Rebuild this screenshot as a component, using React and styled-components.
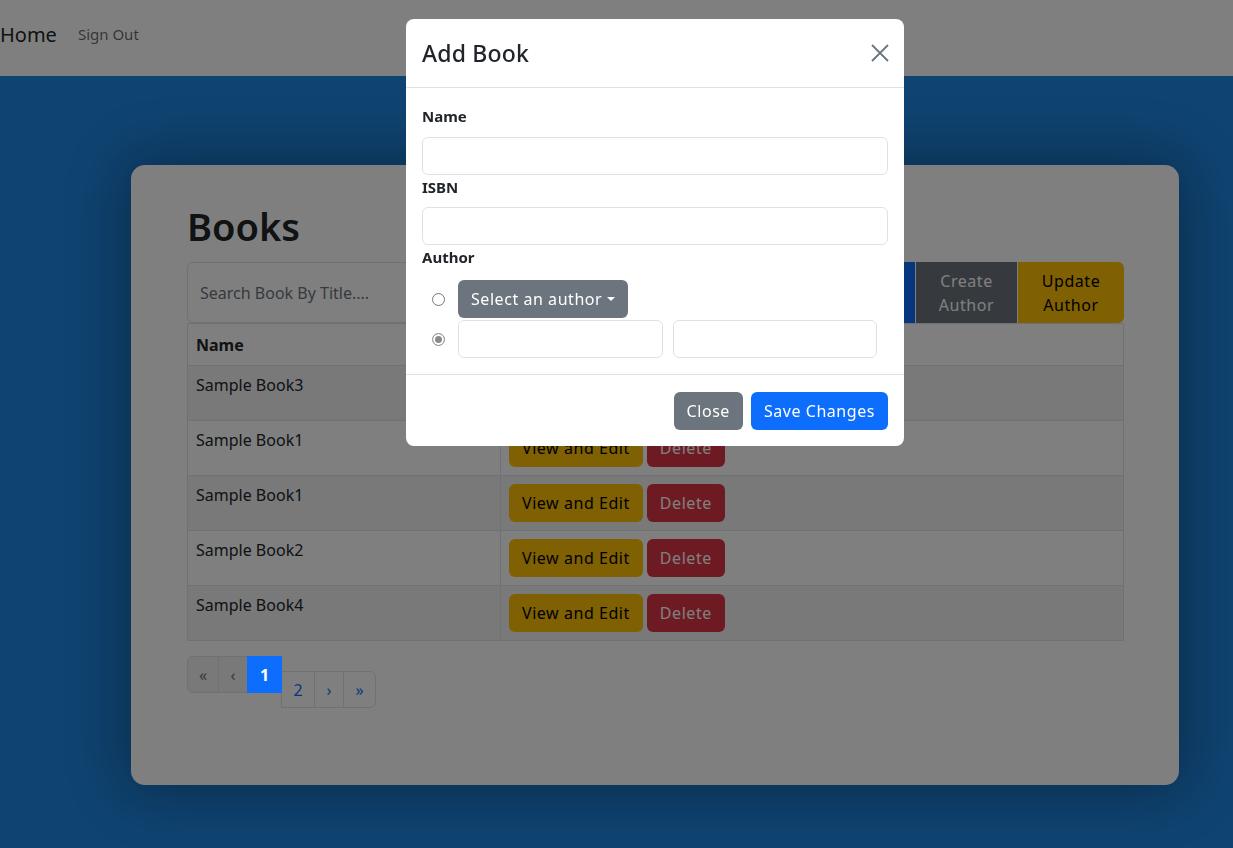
import styled, { createGlobalStyle, css } from "styled-components";

const GlobalStyle = createGlobalStyle`
  * { box-sizing: border-box; }
  body {
    margin: 0;
    font-family: "Noto Sans", "Liberation Sans", sans-serif;
    color: #212529;
    font-size: 16px;
  }
`;

const Page = styled.div`
  min-height: 100vh;
  background: #1e88e5;
  overflow: hidden;
`;

const Navbar = styled.nav`
  height: 76px;
  background: #fff;
  display: flex;
  align-items: center;
  padding-bottom: 8px;
`;

const Brand = styled.a`
  font-size: 20px;
  color: #212529;
  margin-right: 13px;
`;

const NavLink = styled.a`
  font-size: 15px;
  color: rgba(0, 0, 0, 0.6);
  padding: 8px;
`;

const Main = styled.main`
  padding-top: 89px;
  padding-bottom: 63px;
`;

const Card = styled.section`
  width: 1048px;
  height: 620px;
  margin: 0 0 0 131px;
  background: #fff;
  border-radius: 14px;
  padding: 37px 55px 0 56px;
  box-shadow: 0 0 60px 12px rgba(0, 0, 0, 0.3);
`;

const Title = styled.h1`
  font-size: 38px;
  line-height: 48px;
  font-weight: 600;
  margin: 0 0 12px;
`;

const InputGroup = styled.div`
  display: flex;
  height: 61px;
`;

const SearchInput = styled.input`
  flex: 1;
  border: 1px solid #dee2e6;
  border-radius: 6px 0 0 6px;
  padding: 6px 12px;
  font: inherit;
  font-size: 16px;
  &::placeholder { color: #6c757d; }
`;

const variants = {
  primary: css`background: #0d6efd; color: #fff;`,
  secondary: css`background: #6c757d; color: #fff;`,
  warning: css`background: #ffc107; color: #000;`,
  danger: css`background: #dc3545; color: #fff;`,
};

const Button = styled.button`
  border: 1px solid transparent;
  border-radius: 6px;
  padding: 6px 12px;
  font-family: inherit;
  font-size: 16px;
  line-height: 24px;
  letter-spacing: 0.55px;
  cursor: pointer;
  ${(p) => variants[p.$variant]}
`;

const GroupButton = styled(Button)`
  width: ${(p) => p.$w}px;
  border-radius: ${(p) => (p.$last ? "0 6px 6px 0" : "0")};
  margin-left: 1px;
`;

const Table = styled.table`
  width: 100%;
  border-collapse: collapse;
  border: 1px solid #dee2e6;
`;

const Th = styled.th`
  text-align: left;
  padding: 8px;
  height: 42px;
  border: 1px solid #dee2e6;
  font-weight: 700;
`;

const Row = styled.tr`
  background: ${(p) => (p.$striped ? "#f2f2f2" : "#fff")};
`;

const Td = styled.td`
  padding: 8px;
  vertical-align: top;
  border: 1px solid #dee2e6;
  height: 55px;
  width: ${(p) => p.$w || "auto"};
`;

const Actions = styled.div`
  display: flex;
  gap: 4px;
`;

const Pagination = styled.ul`
  list-style: none;
  display: flex;
  align-items: flex-start;
  padding: 0;
  margin: 15px 0 0;
`;

const PageItem = styled.li`
  width: ${(p) => p.$w}px;
  height: 37px;
  margin-top: ${(p) => (p.$low ? "15px" : "0")};
  margin-left: -1px;
  display: flex;
  align-items: center;
  justify-content: center;
  border: 1px solid #dee2e6;
  font-size: 16px;
  color: #0d6efd;
  background: #fff;
  ${(p) => p.$first && css`border-radius: 6px 0 0 6px; margin-left: 0;`}
  ${(p) => p.$last && css`border-radius: 0 6px 6px 0;`}
  ${(p) => p.$disabled && css`color: #6c757d; background: #f2f2f2;`}
  ${(p) => p.$active && css`color: #fff; background: #0d6efd; border-color: #0d6efd; font-weight: 700; position: relative; z-index: 1;`}
`;

const Backdrop = styled.div`
  position: fixed;
  inset: 0;
  background: rgba(0, 0, 0, 0.5);
`;

const Dialog = styled.div`
  position: absolute;
  top: 19px;
  left: 406px;
  width: 498px;
  background: #fff;
  border-radius: 8px;
  overflow: hidden;
`;

const ModalHeader = styled.div`
  display: flex;
  align-items: center;
  justify-content: space-between;
  padding: 16px;
  border-bottom: 1px solid #dee2e6;
`;

const ModalTitle = styled.h4`
  margin: 0;
  font-size: 23px;
  line-height: 36px;
  font-weight: 500;
  letter-spacing: 0.2px;
`;

const CloseX = styled.button`
  border: none;
  background: none;
  padding: 0;
  margin-right: -1px;
  width: 18px;
  height: 18px;
  display: flex;
  cursor: pointer;
`;

const ModalBody = styled.div`
  padding: 16px;
`;

const Label = styled.label`
  display: block;
  font-weight: 700;
  font-size: 15px;
  line-height: 24px;
  margin-bottom: ${(p) => p.$mb}px;
`;

const Field = styled.input`
  display: block;
  width: ${(p) => p.$w || "100%"};
  height: 38px;
  border: 1px solid #dee2e6;
  border-radius: 6px;
  padding: 6px 12px;
  font: inherit;
`;

const OptionRow = styled.div`
  display: flex;
  align-items: center;
  gap: 13px;
  padding-left: 10px;
  margin-top: ${(p) => p.$mt || 0}px;
`;

const Radio = styled.input.attrs({ type: "radio" })`
  appearance: none;
  width: 13px;
  height: 13px;
  margin: 0;
  border-radius: 50%;
  border: 1px solid #767676;
  background: #fff;
  &:checked {
    border-color: #8a8a8a;
    box-shadow: inset 0 0 0 2px #fff, inset 0 0 0 6px #8a8a8a;
  }
`;

const Inputs = styled.div`
  display: flex;
  gap: 10px;
`;

const DropdownButton = styled(Button)`
  display: flex;
  align-items: center;
  &::after {
    content: "";
    margin-left: 5px;
    border-top: 4px solid #fff;
    border-left: 4px solid transparent;
    border-right: 4px solid transparent;
  }
`;

const ModalFooter = styled.div`
  display: flex;
  justify-content: flex-end;
  gap: 8px;
  padding: 17px 16px 16px;
  border-top: 1px solid #dee2e6;
`;

const books = ["Sample Book3", "Sample Book1", "Sample Book1", "Sample Book2", "Sample Book4"];

export default function App() {
  return (
    <>
      <GlobalStyle />
      <Page>
        <Navbar>
          <Brand>Home</Brand>
          <NavLink>Sign Out</NavLink>
        </Navbar>
        <Main>
          <Card>
            <Title>Books</Title>
            <InputGroup>
              <SearchInput placeholder="Search Book By Title...." />
              <GroupButton $variant="primary" $w={105}>Create Book</GroupButton>
              <GroupButton $variant="secondary" $w={101}>Create Author</GroupButton>
              <GroupButton $variant="warning" $w={106} $last>Update Author</GroupButton>
            </InputGroup>
            <Table>
              <thead>
                <tr>
                  <Th>Name</Th>
                  <Th>Actions</Th>
                </tr>
              </thead>
              <tbody>
                {books.map((b, i) => (
                  <Row key={i} $striped={i % 2 === 0}>
                    <Td $w="313px">{b}</Td>
                    <Td>
                      <Actions>
                        <Button $variant="warning">View and Edit</Button>
                        <Button $variant="danger">Delete</Button>
                      </Actions>
                    </Td>
                  </Row>
                ))}
              </tbody>
            </Table>
            <Pagination>
              <PageItem $w={32} $first $disabled>«</PageItem>
              <PageItem $w={30} $disabled>‹</PageItem>
              <PageItem $w={35} $active>1</PageItem>
              <PageItem $w={34} $low>2</PageItem>
              <PageItem $w={30} $low>›</PageItem>
              <PageItem $w={33} $low $last>»</PageItem>
            </Pagination>
          </Card>
        </Main>
        <Backdrop>
          <Dialog>
            <ModalHeader>
              <ModalTitle>Add Book</ModalTitle>
              <CloseX aria-label="Close">
                <svg width="18" height="18" viewBox="0 0 18 18">
                  <path d="M1 1 L17 17 M17 1 L1 17" stroke="#6c757d" strokeWidth="1.8" />
                </svg>
              </CloseX>
            </ModalHeader>
            <ModalBody>
              <Label $mb={9}>Name</Label>
              <Field />
              <Label $mb={8}>ISBN</Label>
              <Field />
              <Label $mb={11}>Author</Label>
              <OptionRow>
                <Radio name="author" />
                <DropdownButton $variant="secondary">Select an author</DropdownButton>
              </OptionRow>
              <OptionRow $mt={2}>
                <Radio name="author" defaultChecked />
                <Inputs>
                  <Field $w="205px" />
                  <Field $w="204px" />
                </Inputs>
              </OptionRow>
            </ModalBody>
            <ModalFooter>
              <Button $variant="secondary">Close</Button>
              <Button $variant="primary">Save Changes</Button>
            </ModalFooter>
          </Dialog>
        </Backdrop>
      </Page>
    </>
  );
}
